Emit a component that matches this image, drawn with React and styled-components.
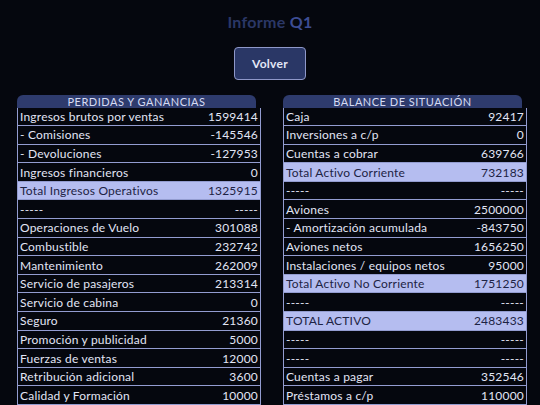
import React from 'react';
import styled, { createGlobalStyle } from 'styled-components';

const GlobalStyle = createGlobalStyle`
  html, body {
    margin: 0;
    padding: 0;
    background: #05070e;
  }
  body {
    font-family: 'Lato', 'Liberation Sans', sans-serif;
    overflow: hidden;
  }
`;

const Page = styled.div`
  width: 540px;
  height: 405px;
  background: #05070e;
  display: flex;
  flex-direction: column;
  align-items: center;
  padding-top: 12px;
  box-sizing: border-box;
`;

const Title = styled.h1`
  margin: 0;
  font-size: 16px;
  line-height: 20px;
  font-weight: 700;
  color: #2b3766;
  letter-spacing: 0.3px;

  span {
    color: #3d4d94;
  }
`;

const BackButton = styled.button`
  margin-top: 15px;
  width: 72px;
  height: 33px;
  background: #2a3766;
  border: 1px solid #8f98c9;
  border-radius: 4px;
  color: #e4e7f6;
  font-family: inherit;
  font-size: 12px;
  font-weight: 700;
  letter-spacing: 0.3px;
  cursor: pointer;
`;

const Columns = styled.div`
  align-self: stretch;
  display: flex;
  gap: 22px;
  padding-left: 17px;
  margin-top: 15px;
`;

const Section = styled.section`
  width: 244px;
  display: flex;
  flex-direction: column;
`;

const Header = styled.div`
  width: 239px;
  height: 13px;
  background: #2e3b6d;
  border-radius: 6px 6px 0 0;
  color: #d6dbf3;
  font-size: 11px;
  line-height: 14px;
  text-align: center;
  letter-spacing: 0.5px;
  text-transform: uppercase;
`;

const Row = styled.div`
  height: 17.6px;
  display: flex;
  align-items: center;
  justify-content: space-between;
  padding: 0 2px;
  border: 1px solid #939cd0;
  border-top: none;
  font-size: 12px;
  letter-spacing: 0.2px;
  background: ${p => (p.$total ? '#b5bdf0' : '#05070e')};
  color: ${p => (p.$total ? '#1d2344' : '#e2e5f5')};

  &:first-of-type {
    border-top: 1px solid #939cd0;
    height: 16.6px;
  }
`;

const perdidas = [
  ['Ingresos brutos por ventas', '1599414'],
  ['- Comisiones', '-145546'],
  ['- Devoluciones', '-127953'],
  ['Ingresos financieros', '0'],
  ['Total Ingresos Operativos', '1325915', true],
  ['-----', '-----'],
  ['Operaciones de Vuelo', '301088'],
  ['Combustible', '232742'],
  ['Mantenimiento', '262009'],
  ['Servicio de pasajeros', '213314'],
  ['Servicio de cabina', '0'],
  ['Seguro', '21360'],
  ['Promoción y publicidad', '5000'],
  ['Fuerzas de ventas', '12000'],
  ['Retribución adicional', '3600'],
  ['Calidad y Formación', '10000'],
];

const balance = [
  ['Caja', '92417'],
  ['Inversiones a c/p', '0'],
  ['Cuentas a cobrar', '639766'],
  ['Total Activo Corriente', '732183', true],
  ['-----', '-----'],
  ['Aviones', '2500000'],
  ['- Amortización acumulada', '-843750'],
  ['Aviones netos', '1656250'],
  ['Instalaciones / equipos netos', '95000'],
  ['Total Activo No Corriente', '1751250', true],
  ['-----', '-----'],
  ['TOTAL ACTIVO', '2483433', true],
  ['-----', '-----'],
  ['-----', '-----'],
  ['Cuentas a pagar', '352546'],
  ['Préstamos a c/p', '110000'],
];

function Statement({ title, rows }) {
  return (
    <Section>
      <Header>{title}</Header>
      {rows.map(([label, value, total], i) => (
        <Row key={i} $total={total}>
          <span>{label}</span>
          <span>{value}</span>
        </Row>
      ))}
    </Section>
  );
}

export default function App() {
  return (
    <Page>
      <GlobalStyle />
      <Title>Informe <span>Q1</span></Title>
      <BackButton>Volver</BackButton>
      <Columns>
        <Statement title="Perdidas y Ganancias" rows={perdidas} />
        <Statement title="Balance de Situación" rows={balance} />
      </Columns>
    </Page>
  );
}
